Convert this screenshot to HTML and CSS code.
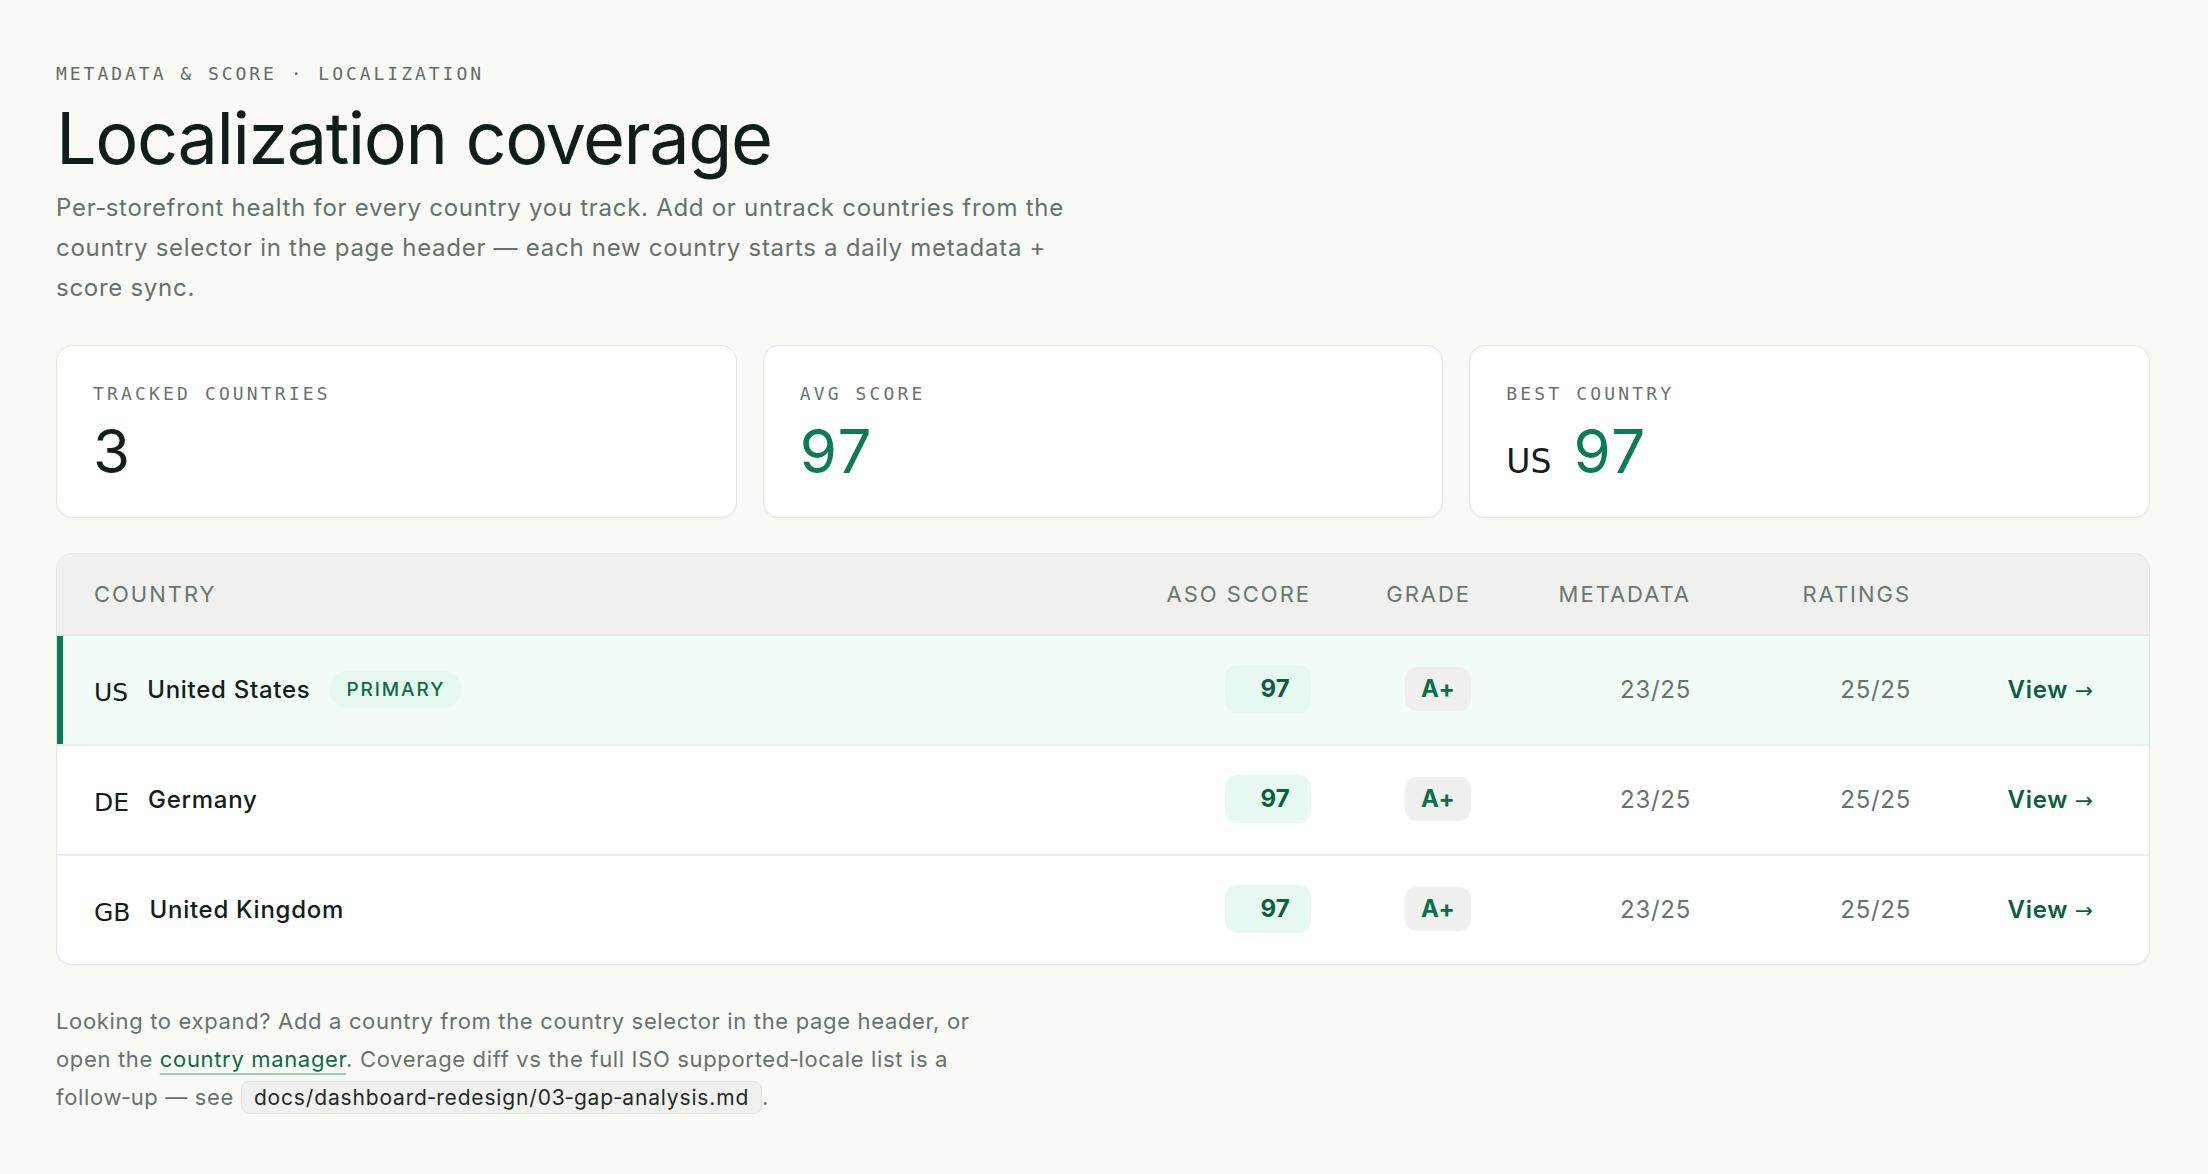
FILE: index.html
```html
<!DOCTYPE html>
<html lang="en">
<head>
<meta charset="utf-8">
<title>Localization coverage</title>
<link rel="stylesheet" href="styles.css">
</head>
<body>
<main class="page">
  <header class="intro">
    <div class="kicker">METADATA &amp; SCORE · LOCALIZATION</div>
    <h1 class="title">Localization coverage</h1>
    <p class="lede">Per‑storefront health for every country you track. Add or untrack countries from the country selector in the page header — each new country starts a daily metadata + score sync.</p>
  </header>

  <section class="stats">
    <div class="stat">
      <div class="stat-label">TRACKED COUNTRIES</div>
      <div class="stat-value">3</div>
    </div>
    <div class="stat">
      <div class="stat-label">AVG SCORE</div>
      <div class="stat-value green">97</div>
    </div>
    <div class="stat">
      <div class="stat-label">BEST COUNTRY</div>
      <div class="stat-value best"><span class="stat-flag">US</span><span class="green">97</span></div>
    </div>
  </section>

  <section class="table">
    <div class="row head">
      <div class="c-country">Country</div>
      <div class="c-num">ASO score</div>
      <div class="c-num">Grade</div>
      <div class="c-num">Metadata</div>
      <div class="c-num">Ratings</div>
      <div class="c-num"></div>
    </div>
    <div class="row body primary">
      <div class="c-country"><span class="flag">US</span><span class="name">United States</span><span class="badge">PRIMARY</span></div>
      <div class="c-num"><span class="score">97</span></div>
      <div class="c-num"><span class="grade">A+</span></div>
      <div class="c-num muted">23/25</div>
      <div class="c-num muted">25/25</div>
      <div class="c-num"><a class="view" href="#">View <span class="arrow">→</span></a></div>
    </div>
    <div class="row body">
      <div class="c-country"><span class="flag">DE</span><span class="name">Germany</span></div>
      <div class="c-num"><span class="score">97</span></div>
      <div class="c-num"><span class="grade">A+</span></div>
      <div class="c-num muted">23/25</div>
      <div class="c-num muted">25/25</div>
      <div class="c-num"><a class="view" href="#">View <span class="arrow">→</span></a></div>
    </div>
    <div class="row body last">
      <div class="c-country"><span class="flag">GB</span><span class="name">United Kingdom</span></div>
      <div class="c-num"><span class="score">97</span></div>
      <div class="c-num"><span class="grade">A+</span></div>
      <div class="c-num muted">23/25</div>
      <div class="c-num muted">25/25</div>
      <div class="c-num"><a class="view" href="#">View <span class="arrow">→</span></a></div>
    </div>
  </section>

  <p class="footnote">Looking to expand? Add a country from the country selector in the page header, or open the <a class="link" href="#">country manager</a>. Coverage diff vs the full ISO supported‑locale list is a follow‑up — see <code class="code">docs/dashboard‑redesign/03‑gap‑analysis.md</code>.</p>
</main>
</body>
</html>
```

FILE: styles.css
```css
* { box-sizing: border-box; }

html, body {
  margin: 0;
  background: #f9f9f6;
}

body {
  font-family: Inter, "Noto Sans", sans-serif;
  color: #102019;
}

.page {
  padding: 62px 58px 40px 56px;
  display: flex;
  flex-direction: column;
}

.intro {
  display: flex;
  flex-direction: column;
}

.kicker {
  font-family: "DejaVu Sans Mono", monospace;
  font-size: 18px;
  line-height: 24px;
  letter-spacing: 0.165em;
  color: #5f6c66;
}

.title {
  margin: 12px 0 0;
  font-size: 72px;
  line-height: 1.1;
  font-weight: 400;
  letter-spacing: -0.02em;
  color: #0f1e18;
}

.lede {
  margin: 11px 0 0;
  max-width: 1025px;
  font-size: 24px;
  line-height: 40px;
  letter-spacing: 0.03em;
  color: #65716b;
}

.stats {
  margin-top: 37px;
  display: grid;
  grid-template-columns: repeat(3, 1fr);
  gap: 26px;
}

.stat {
  background: #ffffff;
  border: 1px solid #e3e3df;
  border-radius: 16px;
  padding: 36px;
  box-shadow: 0 2px 1px rgba(0, 0, 0, 0.025);
  display: flex;
  flex-direction: column;
  gap: 16px;
}

.stat-label {
  font-family: "DejaVu Sans Mono", monospace;
  font-size: 18px;
  line-height: 23px;
  letter-spacing: 0.175em;
  color: #66736d;
}

.stat-value {
  font-size: 60px;
  line-height: 60px;
  font-weight: 400;
  letter-spacing: 0.03em;
  color: #102019;
}

.green { color: #0b7a55; }

.stat-value.best {
  display: flex;
  align-items: baseline;
  gap: 22px;
}

.stat-flag {
  font-family: "DejaVu Sans", sans-serif;
  font-size: 33px;
  line-height: 1;
  color: #102019;
  letter-spacing: 0;
}

.table {
  margin-top: 35px;
  background: #ffffff;
  border: 1px solid #e3e3df;
  border-radius: 16px;
  overflow: hidden;
  box-shadow: 0 2px 1px rgba(0, 0, 0, 0.025);
}

.row {
  display: grid;
  grid-template-columns: 1fr 200px 160px 220px 220px 183px;
  align-items: center;
  padding: 0 55px 0 37px;
}

.row.head {
  height: 82px;
  background: #f0f1ee;
  border-bottom: 2px solid #e4e6e3;
  font-size: 22px;
  letter-spacing: 0.09em;
  text-transform: uppercase;
  color: #6b7570;
}

.row.body {
  height: 110px;
  padding-bottom: 2px;
  border-bottom: 2px solid #ececea;
  font-size: 24px;
  letter-spacing: 0.03em;
}

.row.body.last {
  height: 108px;
  border-bottom: 0;
}

.row.primary {
  background: #f2fcf7;
  box-shadow: inset 6px 0 0 #0b7a55;
}

.c-num { text-align: right; }

.c-country {
  display: flex;
  align-items: center;
  gap: 19px;
}

.flag {
  font-family: "DejaVu Sans", sans-serif;
  font-size: 25px;
  line-height: 30px;
  padding-top: 8px;
  letter-spacing: 0;
  color: #102019;
}

.name {
  font-weight: 500;
  color: #102019;
}

.badge {
  display: inline-flex;
  align-items: center;
  height: 37px;
  padding: 0 17px;
  border-radius: 999px;
  background: #e7f8ef;
  color: #0b6b4a;
  font-size: 19px;
  font-weight: 500;
  letter-spacing: 0.1em;
}

.score {
  display: inline-block;
  height: 48px;
  line-height: 48px;
  padding: 0 21px 0 35px;
  border-radius: 12px;
  background: #e6f8ef;
  color: #0b5e42;
  font-weight: 700;
  letter-spacing: 0.01em;
}

.grade {
  display: inline-block;
  height: 44px;
  line-height: 44px;
  padding: 0 16px;
  border-radius: 12px;
  background: #eff0ed;
  color: #0b6e4c;
  font-weight: 700;
  letter-spacing: 0.01em;
}

.muted { color: #67726d; }

.view {
  color: #0b5e42;
  font-weight: 600;
  text-decoration: none;
}

.arrow {
  font-family: "DejaVu Sans", sans-serif;
  font-size: 22px;
  font-weight: 400;
}

.footnote {
  margin: 37px 0 0;
  max-width: 948px;
  font-size: 22px;
  line-height: 38px;
  letter-spacing: 0.03em;
  color: #67726d;
}

.link {
  color: #0b6b4a;
  text-decoration: underline;
  text-decoration-color: #9ccbb6;
  text-decoration-thickness: 2px;
  text-underline-offset: 6px;
}

.code {
  font-family: Inter, "Noto Sans", sans-serif;
  font-size: 21px;
  letter-spacing: 0.04em;
  color: #1f2a26;
  background: #f0f1ee;
  border: 1px solid #e2e3df;
  border-radius: 8px;
  padding: 3px 12px;
}
```
